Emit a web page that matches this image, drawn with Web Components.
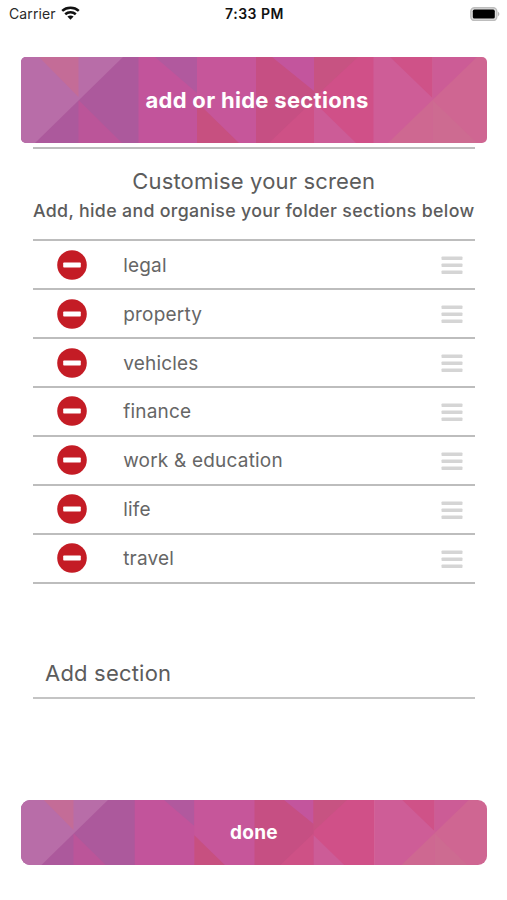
<!DOCTYPE html>
<html lang="en">
<head>
<meta charset="utf-8">
<title>Sections</title>
<style>
body{margin:0;background:#fff;font-family:Inter,"Liberation Sans",sans-serif}
</style>
</head>
<body>
<sections-screen></sections-screen>
<script>
const define=(name,html)=>{
  const t=document.createElement('template');
  t.innerHTML=html;
  customElements.define(name,class extends HTMLElement{
    constructor(){super();this.attachShadow({mode:'open'}).append(t.content.cloneNode(true));}
  });
};

define('status-bar',`<style>
:host{display:grid;grid-template-columns:1fr auto 1fr;align-items:center;height:27px;padding:0 7px 1px 9px;color:#111}
.left{display:flex;align-items:center;gap:5px;font-size:14px;letter-spacing:.1px;color:#2a2a2a}
.left svg{margin-top:-2px}
.time{font-size:14px;font-weight:600;letter-spacing:.5px}
.battery{justify-self:end}
svg{display:block}
</style>
<div class="left"><span>Carrier</span>
<svg width="19" height="14" viewBox="0 0 19 14" fill="none" stroke="#111" stroke-width="2.5"><path d="M1.2 4.9C5.8.7 13.2.7 17.8 4.9M4.2 8.2c3-2.7 7.6-2.7 10.6 0"/><path d="M9.5 13.8 6.4 10.5c1.7-1.5 4.5-1.5 6.2 0Z" fill="#111" stroke="none"/></svg></div>
<div class="time">7:33 PM</div>
<svg class="battery" width="30" height="14" viewBox="0 0 30 14"><rect x=".8" y=".7" width="26" height="12.8" rx="3.7" fill="#dedede" stroke="#bdbdbd" stroke-width="1.4"/><rect x="2.8" y="2.6" width="22" height="8.9" rx="1.6"/><path d="M27.9 4.6q3 2.4 0 4.8Z" fill="#b5b5b5"/></svg>`);

define('pattern-banner',`<style>
:host{display:grid;width:466px;height:85.5px;border-radius:5px;overflow:hidden;color:#fff;font-weight:650}
svg,.label{grid-area:1/1;width:100%;height:100%;min-height:0}
.label{display:grid;place-items:center;z-index:1}
</style>
<svg viewBox="0 0 466 85.5" preserveAspectRatio="none">
<path fill="#ac599c" d="M0 0H118V86H0Z"/>
<path fill="#bb5599" d="M57.5 43 101 86H57.5Z"/>
<path fill="#b86da8" d="M0 0H102L14 86H0Z"/>
<path fill="#c46c97" d="M18 0H57.5V40Z"/>
<path fill="#c2549b" d="M117.5 0H177V86H117.5Z"/>
<path fill="#b1599e" d="M134 0H176V36Z"/>
<path fill="#c6569a" d="M176 0H236V86H176Z"/>
<path fill="#c75080" d="M176 45 218 86H176Z"/>
<path fill="#c64f83" d="M235 0H294V86H235Z"/>
<path fill="#c3559d" d="M251 0H293V34Z"/>
<path fill="#ce5186" d="M293 43V86H248Z"/>
<path fill="#d05088" d="M293 0H353V86H293Z"/>
<path fill="#c75382" d="M293 0H337L293 41Z"/>
<path fill="#cc5c97" d="M293 45 335 86H293Z"/>
<path fill="#ce5d97" d="M352.5 0H412V86H352.5Z"/>
<path fill="#cf5288" d="M369 0H411.5V41Z"/>
<path fill="#ce6891" d="M411.5 43V86H367Z"/>
<path fill="#cf6692" d="M411.5 0H466V86H411.5Z"/>
<path fill="#cc5c96" d="M411.5 0H456L411.5 43Z"/>
<path fill="#cd6b91" d="M411.5 43 456 86H411.5Z"/>
</svg><div class="label"><slot></slot></div>`);
customElements.define('done-button',class extends customElements.get('pattern-banner'){
  constructor(){super();
    this.shadowRoot.querySelector('svg').setAttribute('viewBox','6 10.5 457 64.2');
    const s=document.createElement('style');
    s.textContent=':host{height:65.5px;border-radius:9px}';
    this.shadowRoot.append(s);}
});

define('section-row',`<style>
:host{display:flex;align-items:center;box-sizing:border-box;height:48.9px;padding:0 12px 0 24px;border-bottom:2px solid #bdbdbd;font-size:19px;color:#666;letter-spacing:.2px}
.name{flex:1;margin-left:36.7px;padding-top:1px}
svg{display:block}
.grip{margin-top:2.5px}
</style>
<svg width="30" height="30" viewBox="0 0 30 30"><circle cx="15" cy="15" r="14.8" fill="#c41c25"/><rect x="6.2" y="12.4" width="17.6" height="5.2" rx=".8" fill="#fff"/></svg>
<span class="name"><slot></slot></span>
<svg class="grip" width="22" height="19" viewBox="0 0 22 19" fill="#d5d5d5"><rect x=".5" y=".5" width="21" height="3.6" rx=".8"/><rect x=".5" y="7.5" width="21" height="3.6" rx=".8"/><rect x=".5" y="14.5" width="21" height="3.6" rx=".8"/></svg>`);

define('screen-heading',`<style>
:host{display:block;box-sizing:border-box;height:94.3px;padding-top:17px;border-top:2px solid #bdbdbd;border-bottom:2px solid #bdbdbd;text-align:center;color:#5c5c5c;white-space:nowrap}
.title{font-size:22px;line-height:30px;letter-spacing:.17px}
.sub{font-size:17.8px;line-height:30px;font-weight:500;letter-spacing:.32px;display:flex;justify-content:center}
</style><div class="title"><slot name="title"></slot></div><div class="sub"><slot></slot></div>`);

define('add-field',`<style>
:host{display:flex;align-items:center;box-sizing:border-box;height:54px;padding:3px 12px 0 12.5px;border-bottom:2px solid #c4c4c4;font-size:22px;color:#5c5c5c;letter-spacing:.2px}
</style><slot></slot>`);

define('sections-screen',`<style>
:host{display:flex;flex-direction:column;height:900px;background:#fff;overflow:hidden}
pattern-banner{margin:29px 0 0 21px;font-size:22px;letter-spacing:.3px;text-indent:6px}
main{margin:4.5px 32px 0 32.5px}
add-field{margin-top:61.9px}
done-button{margin:100.4px 0 0 21px;font-size:19px;letter-spacing:.3px}
</style>
<status-bar></status-bar>
<pattern-banner>add or hide sections</pattern-banner>
<main>
<screen-heading><span slot="title">Customise your screen</span>Add, hide and organise your folder sections below</screen-heading>
<section-row>legal</section-row><section-row>property</section-row><section-row>vehicles</section-row><section-row>finance</section-row><section-row>work &amp; education</section-row><section-row>life</section-row><section-row>travel</section-row>
<add-field>Add section</add-field>
</main>
<done-button>done</done-button>`);
</script>
</body>
</html>
